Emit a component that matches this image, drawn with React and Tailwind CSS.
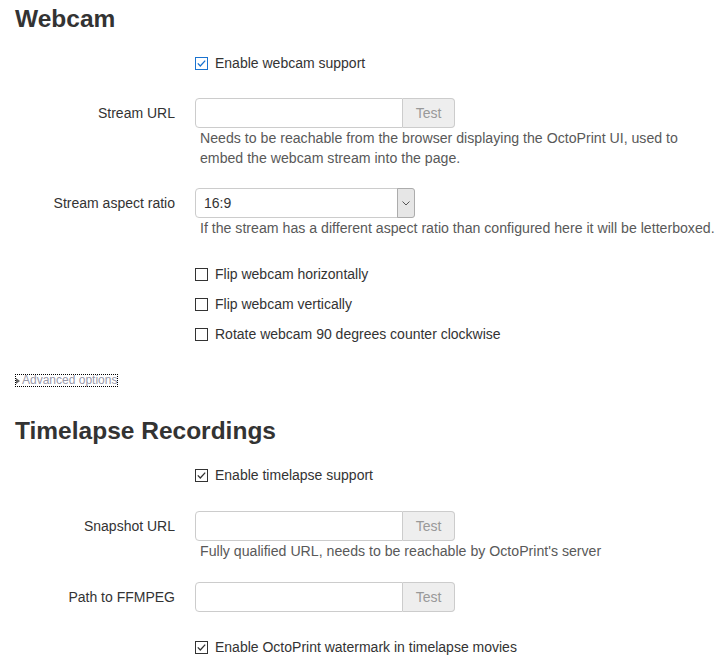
import React from 'react';

const Check = ({ checked, focused }) => {
  const border = focused ? '#1a73d0' : '#333333';
  return (
    <svg width="13" height="13" viewBox="0 0 13 13" className="mr-[7px] shrink-0">
      <rect x="0.5" y="0.5" width="12" height="12" fill="#fff" stroke={border} />
      {checked && (
        <path d="M2.8 6.4 L5.3 9 L10.2 3.6" fill="none" stroke={focused ? '#1a73d0' : '#333333'} strokeWidth="1.3" />
      )}
    </svg>
  );
};

const CheckRow = ({ label, checked, focused, className = '' }) => (
  <label className={`ml-[180px] flex h-5 items-center leading-5 ${className}`}>
    <Check checked={checked} focused={focused} />
    <span>{label}</span>
  </label>
);

const Row = ({ label, children, className = '' }) => (
  <div className={`flex ${className}`}>
    <label className="w-[160px] shrink-0 pt-[5px] text-right leading-5">{label}</label>
    <div className="ml-[20px]">{children}</div>
  </div>
);

const TestInput = () => (
  <div className="flex h-[30px]">
    <div className="h-[30px] w-[208px] rounded-l-[4px] border border-[#cccccc] bg-white" />
    <div className="flex h-[30px] w-[52px] items-center justify-center rounded-r-[4px] border-y border-r border-[#cccccc] bg-[#eeeeee] text-[#999999]">
      Test
    </div>
  </div>
);

const Help = ({ children }) => (
  <p className="pl-[5px] text-[14.15px] leading-5 whitespace-nowrap text-[#595959]">{children}</p>
);

export default function App() {
  return (
    <div className="min-h-[670px] bg-white pl-[15px] font-['Liberation_Sans',Arial,sans-serif] text-[14px] leading-5 text-[#333333]">
      <h3 className="text-[24.5px] font-bold leading-[38px]">Webcam</h3>

      <CheckRow label="Enable webcam support" checked focused className="mt-[15px]" />

      <Row label="Stream URL" className="mt-[25px]">
        <TestInput />
        <Help>
          Needs to be reachable from the browser displaying the OctoPrint UI, used to
          <br />
          embed the webcam stream into the page.
        </Help>
      </Row>

      <Row label="Stream aspect ratio" className="mt-[20px]">
        <div className="flex h-[30px] w-[220px] rounded-[4px] border border-[#cccccc] bg-white">
          <div className="flex-1 pl-[8px] leading-[28px]">16:9</div>
          <div className="-my-px -mr-px flex w-[18px] items-center justify-center rounded-r-[3px] border border-[#acacac] bg-[#e6e6e6]">
            <svg width="8" height="5" viewBox="0 0 8 5">
              <path d="M0.5 0.5 L4 4 L7.5 0.5" fill="none" stroke="#555" strokeWidth="1" />
            </svg>
          </div>
        </div>
        <Help>If the stream has a different aspect ratio than configured here it will be letterboxed.</Help>
      </Row>

      <div className="mt-[26px] flex flex-col gap-[10px]">
        <CheckRow label="Flip webcam horizontally" />
        <CheckRow label="Flip webcam vertically" />
        <CheckRow label="Rotate webcam 90 degrees counter clockwise" />
      </div>

      <div className="mt-[31px] flex">
        <span className="ml-px inline-flex h-[11px] items-center text-[12px] leading-[11px] text-[#9a9aab] outline-1 outline-dotted outline-black">
          <svg width="4" height="6" viewBox="0 0 4 6" className="mr-[2px]">
            <path d="M0 0 L4 3 L0 6 Z" fill="#666" />
          </svg>
          Advanced options
        </span>
      </div>

      <h3 className="mt-[26px] text-[24.5px] font-bold leading-[38px]">Timelapse Recordings</h3>

      <CheckRow label="Enable timelapse support" checked className="mt-[15px]" />

      <Row label="Snapshot URL" className="mt-[26px]">
        <TestInput />
        <Help>Fully qualified URL, needs to be reachable by OctoPrint's server</Help>
      </Row>

      <Row label="Path to FFMPEG" className="mt-[21px]">
        <TestInput />
      </Row>

      <CheckRow label="Enable OctoPrint watermark in timelapse movies" checked className="mt-[25px]" />
    </div>
  );
}
